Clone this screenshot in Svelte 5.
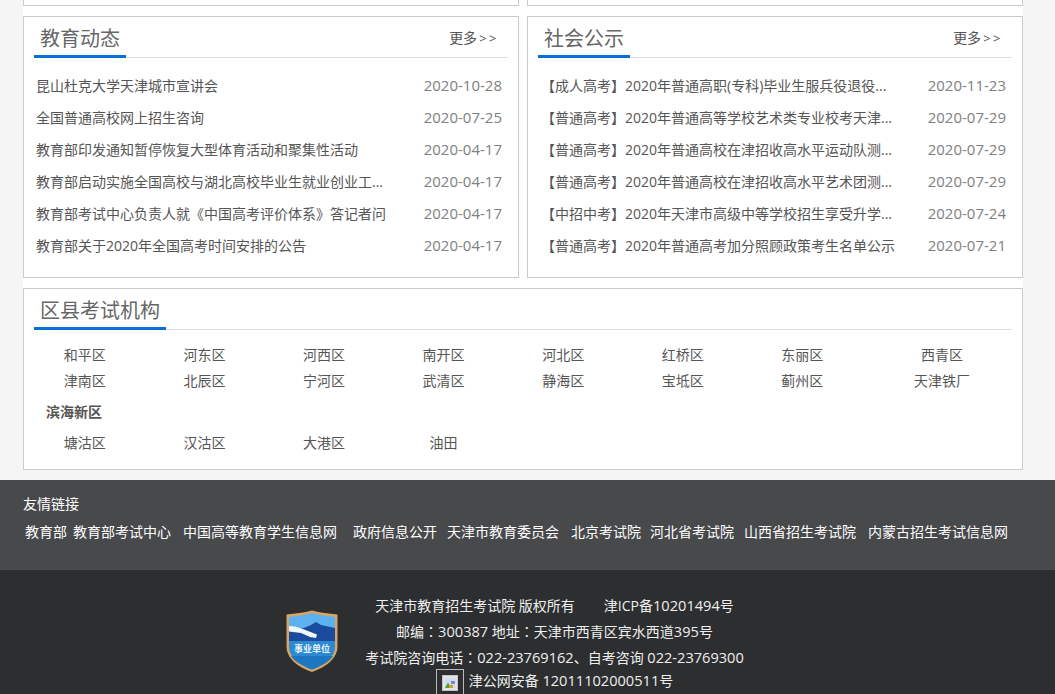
<script>
  const news = [
    ['昆山杜克大学天津城市宣讲会', '2020-10-28'],
    ['全国普通高校网上招生咨询', '2020-07-25'],
    ['教育部印发通知暂停恢复大型体育活动和聚集性活动', '2020-04-17'],
    ['教育部启动实施全国高校与湖北高校毕业生就业创业工...', '2020-04-17'],
    ['教育部考试中心负责人就《中国高考评价体系》答记者问', '2020-04-17'],
    ['教育部关于2020年全国高考时间安排的公告', '2020-04-17']
  ];
  const notices = [
    ['【成人高考】2020年普通高职(专科)毕业生服兵役退役...', '2020-11-23'],
    ['【普通高考】2020年普通高等学校艺术类专业校考天津...', '2020-07-29'],
    ['【普通高考】2020年普通高校在津招收高水平运动队测...', '2020-07-29'],
    ['【普通高考】2020年普通高校在津招收高水平艺术团测...', '2020-07-29'],
    ['【中招中考】2020年天津市高级中等学校招生享受升学...', '2020-07-24'],
    ['【普通高考】2020年普通高考加分照顾政策考生名单公示', '2020-07-21']
  ];
  const districts = ['和平区','河东区','河西区','南开区','河北区','红桥区','东丽区','西青区','津南区','北辰区','宁河区','武清区','静海区','宝坻区','蓟州区','天津铁厂'];
  const binhai = ['塘沽区','汉沽区','大港区','油田'];
  const links = [['教育部',6],['教育部考试中心',12],['中国高等教育学生信息网',16],['政府信息公开',10],['天津市教育委员会',12],['北京考试院',9],['河北省考试院',10],['山西省招生考试院',12],['内蒙古招生考试信息网',0]];
  const cards = [{ title: '教育动态', rows: news }, { title: '社会公示', rows: notices }];
</script>

<div class="page">
  <div class="top">
    <div class="stub"></div>
    <div class="stub"></div>
  </div>

  <div class="two">
    {#each cards as card}
      <section class="card">
        <header class="head">
          <h2>{card.title}</h2>
          <a class="more" href="#more">更多<span class="gt">&gt;&gt;</span></a>
        </header>
        <ul>
          {#each card.rows as row}
            <li><span class="t">{row[0]}</span><span class="d">{row[1]}</span></li>
          {/each}
        </ul>
      </section>
    {/each}
  </div>

  <section class="card wide">
    <header class="head"><h2>区县考试机构</h2></header>
    <div class="grid first">
      {#each districts as d}<span>{d}</span>{/each}
    </div>
    <div class="sub">滨海新区</div>
    <div class="grid">
      {#each binhai as d}<span>{d}</span>{/each}
    </div>
  </section>
</div>

<footer>
  <div class="friends">
    <div class="ft">友情链接</div>
    <div class="links">
      {#each links as l}
        <a href="#l" style="margin-right:{l[1]}px">{l[0]}</a>
      {/each}
    </div>
  </div>
  <div class="copy">
    <svg class="badge" width="52" height="62" viewBox="0 0 52 62">
      <path d="M26 0.5 C34 3 43 3.5 51.5 4.5 V36 C51.5 49 40 57 26 62 C12 57 0.5 49 0.5 36 V4.5 C9 3.5 18 3 26 0.5Z" fill="#d9a465"/>
      <path d="M26 3 C34 5.3 42 6 49 6.8 V36 C49 47.5 38.5 55 26 59.5 C13.5 55 3 47.5 3 36 V6.8 C10 6 18 5.3 26 3Z" fill="#5db1ee"/>
      <path d="M3 19 L15 19 L24 15.5 L30 12 L35 15 L49 18 V32 H3Z" fill="#1b4b9d"/>
      <path d="M3 16 L9 16.5 C15 18 22 21 31 24.5 L30 28 L24 27 L15 23 L3 21.5Z" fill="#f1f6fa"/>
      <path d="M3 31 H49 V36 C49 47.5 38.5 55 26 59.5 C13.5 55 3 47.5 3 36Z" fill="#2b8ad2"/>
      <path d="M5 46 H47 C43 52 35 56 26 59.5 C17 56 9 52 5 46Z" fill="#1c76c0"/>
      <text x="26" y="42" text-anchor="middle" font-size="9" font-weight="700" fill="#eaf3fa">事业单位</text>
    </svg>
    <div class="info">
      <p>天津市教育招生考试院 版权所有<span class="sp"></span>津ICP备<span class="num">10201494</span>号</p>
      <p>邮编<span class="c">：</span><span class="num">300387</span> 地址<span class="c">：</span>天津市西青区宾水西道<span class="num">395</span>号</p>
      <p>考试院咨询电话<span class="c">：</span><span class="num">022-23769162</span>、自考咨询 <span class="num">022-23769300</span></p>
      <p class="gov">
        <span class="broken">
          <svg width="16" height="16" viewBox="0 0 16 16">
            <rect x="0.5" y="0.5" width="15" height="15" fill="#e4e4e4" stroke="#c4c4c4"/>
            <rect x="3" y="3" width="10" height="10" fill="#c8def4"/>
            <path d="M3 13 L6 7.5 L9 13Z" fill="#4f9e3c"/>
            <rect x="9" y="6" width="4" height="3" fill="#8a7fd0"/>
            <rect x="7" y="10" width="4" height="3" fill="#d8a020"/>
          </svg>
        </span><span>津公网安备 <span class="num">12011102000511</span>号</span>
      </p>
    </div>
  </div>
</footer>

<style>
  :global(html), :global(body) {
    margin: 0;
    background: #f5f5f5;
    height: 694px;
    overflow: hidden;
  }
  * { box-sizing: border-box; }
  .page, footer {
    font-family: "Open Sans", "Noto Sans CJK SC", sans-serif;
    font-size: 14px;
    color: #555;
  }
  .page {
    width: 1000px;
    margin-left: 23px;
    background: #fff;
  }
  .top, .two {
    display: flex;
    gap: 8px;
  }
  .stub {
    width: 496px;
    height: 6px;
    border: 1px solid #ccc;
    border-top: 0;
  }
  .two { margin-top: 10px; }
  .card {
    border: 1px solid #ccc;
    width: 496px;
    height: 262px;
    padding: 0 10px;
  }
  .wide {
    width: 1000px;
    height: 182px;
    margin-top: 10px;
  }
  .head {
    display: flex;
    justify-content: space-between;
    align-items: flex-start;
    height: 41px;
    border-bottom: 1px solid #ddd;
  }
  h2 {
    margin: 0;
    height: 41px;
    padding: 6px 6px 0;
    font-size: 20px;
    line-height: 32px;
    font-weight: 400;
    color: #666;
    border-bottom: 3px solid #0b6fd8;
  }
  .more {
    color: #555;
    text-decoration: none;
    line-height: 42px;
    padding-right: 9px;
  }
  .gt { margin-left: 2px; letter-spacing: 2.5px; font-size: 13px; }
  ul {
    list-style: none;
    margin: 12px 0 0;
    padding: 0 6px 0 2px;
  }
  .card:nth-child(2) ul { padding-left: 3px; }
  li {
    display: flex;
    justify-content: space-between;
    height: 32px;
    line-height: 32px;
  }
  .d { color: #808080; font-size: 15px; line-height: 31px; }
  .grid {
    display: grid;
    grid-template-columns: repeat(7, 119.6px) 1fr;
    margin: 0 -10px 0 -9px;
    text-align: center;
    line-height: 26px;
  }
  .first { margin-top: 12px; }
  .sub {
    font-weight: 700;
    line-height: 26px;
    margin: 5px 0 5px 12px;
  }
  footer { color: #fff; margin-top: 10px; }
  .friends {
    background: #48494b;
    height: 90px;
    padding: 14px 0 0 23px;
  }
  .ft { line-height: 20px; }
  .links { margin: 6px 0 0 2px; line-height: 24px; display: flex; }
  .links a { color: #fff; text-decoration: none; white-space: nowrap; }
  .copy {
    background: #2d2e30;
    height: 130px;
    display: flex;
    justify-content: center;
    gap: 27px;
    padding: 24px 25px 0 0;
  }
  .badge { margin-top: 16px; flex: none; }
  .info { width: 379px; text-align: center; color: #eee; }
  p { margin: 0 0 2px; height: 24px; line-height: 24px; white-space: nowrap; }
  .sp { display: inline-block; width: 29px; }
  .num { font-size: 14.6px; line-height: 1; }
  .c { font-family: "Noto Sans CJK TC", sans-serif; line-height: 1; }
  .gov {
    display: flex;
    justify-content: center;
    height: auto;
    margin-top: -3px;
  }
  .broken {
    display: inline-flex;
    align-items: center;
    justify-content: center;
    width: 28px;
    height: 28px;
    margin-right: 5px;
    border: 1px solid #bbb;
    flex: none;
  }
</style>
